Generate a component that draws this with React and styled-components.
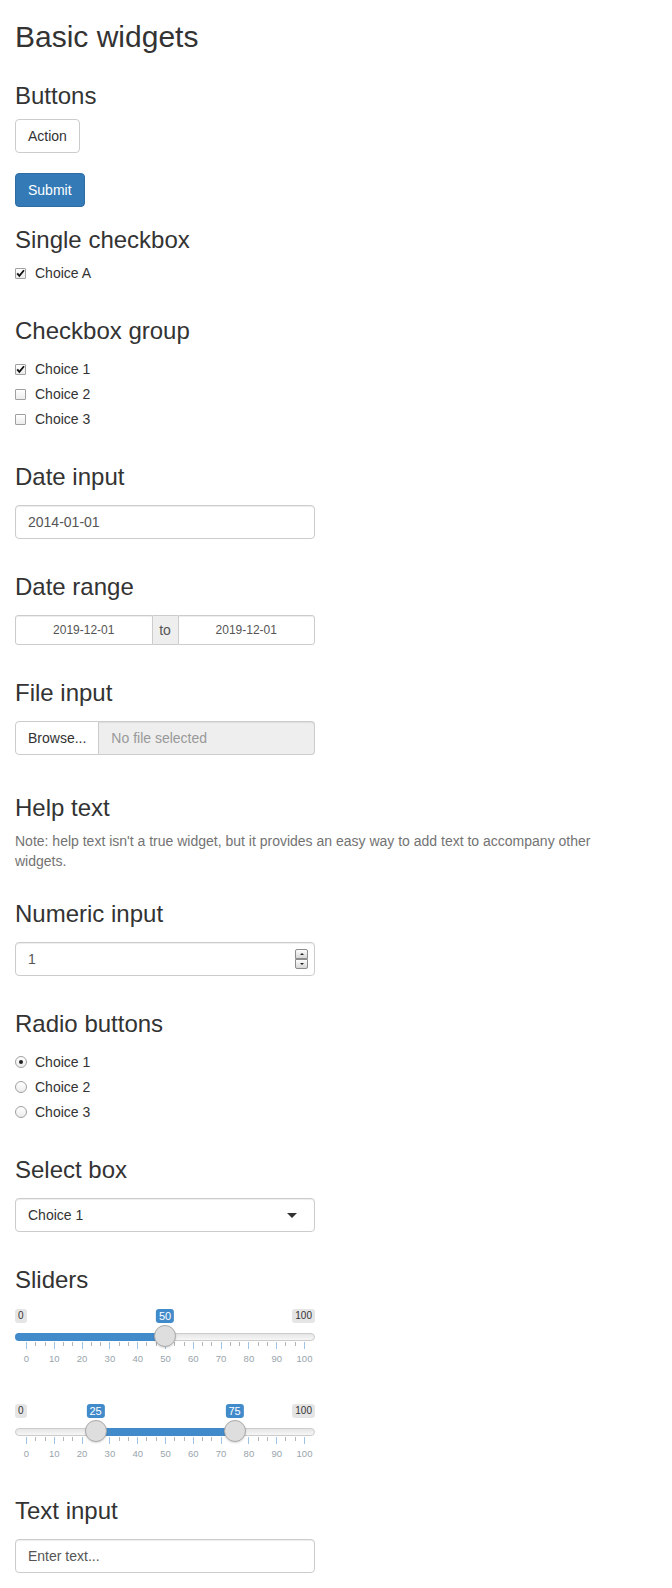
import React from "react";
import styled, { createGlobalStyle } from "styled-components";

const GlobalStyle = createGlobalStyle`
  html, body {
    margin: 0;
    padding: 0;
    background: #fff;
  }
  body {
    font-family: "Liberation Sans", Helvetica, Arial, sans-serif;
    font-size: 14px;
    line-height: 20px;
    color: #333;
  }
  * { box-sizing: border-box; }
`;

const Page = styled.div`
  display: flow-root;
  padding: 0 15px;
`;

const Title = styled.h2`
  margin: 20px 0 10px;
  font-size: 30px;
  font-weight: 500;
  line-height: 33px;
`;

const Section = styled.section`
  display: flow-root;
  margin-bottom: ${(p) => p.$after ?? 15}px;
`;

const Heading = styled.h3`
  margin: 20px 0 ${(p) => p.$gap ?? 10}px;
  font-size: 24px;
  font-weight: 500;
  line-height: 26px;
`;

/* buttons */
const ButtonStack = styled.div`
  display: flex;
  flex-direction: column;
  align-items: flex-start;
  gap: 20px;
`;

const Button = styled.button`
  height: 34px;
  padding: 6px 12px;
  font-family: inherit;
  font-size: 14px;
  line-height: 20px;
  border-radius: 4px;
  border: 1px solid ${(p) => (p.$primary ? "#2e6da4" : "#ccc")};
  background: ${(p) => (p.$primary ? "#337ab7" : "#fff")};
  color: ${(p) => (p.$primary ? "#fff" : "#333")};
`;

/* checkboxes and radios */
const OptionList = styled.div`
  display: flex;
  flex-direction: column;
  gap: 5px;
`;

const Option = styled.label`
  display: flex;
  align-items: center;
  gap: ${(p) => (p.$round ? 8 : 9)}px;
  height: 20px;
`;

const Box = styled.span`
  flex: none;
  display: flex;
  align-items: center;
  justify-content: center;
  width: ${(p) => (p.$round ? 12 : 11)}px;
  height: ${(p) => (p.$round ? 12 : 11)}px;
  border: 1px solid #a0a0a0;
  border-radius: ${(p) => (p.$round ? "50%" : "1px")};
  background: linear-gradient(#ffffff, #ececec);
`;

const Dot = styled.span`
  width: 4px;
  height: 4px;
  border-radius: 50%;
  background: #222;
`;

const Check = () => (
  <svg width="9" height="9" viewBox="0 0 9 9" style={{ overflow: "visible" }}>
    <path d="M1.2 4.3 L3.4 6.9 L8 1.2" fill="none" stroke="#111" strokeWidth="1.8" />
  </svg>
);

const Choice = ({ label, checked, round }) => (
  <Option $round={round}>
    <Box $round={round}>{checked && (round ? <Dot /> : <Check />)}</Box>
    {label}
  </Option>
);

/* text-like fields */
const Field = styled.div`
  display: flex;
  align-items: center;
  justify-content: space-between;
  width: 300px;
  height: 34px;
  padding: 0 ${(p) => p.$padRight ?? 12}px 0 12px;
  border: 1px solid #ccc;
  border-radius: 4px;
  box-shadow: inset 0 1px 1px rgba(0, 0, 0, 0.075);
  background: #fff;
  color: ${(p) => p.$color || "#555"};
`;

const RangeGroup = styled.div`
  display: flex;
  width: 300px;
  height: 30px;
`;

const RangeInput = styled.div`
  flex: 1;
  display: flex;
  align-items: center;
  justify-content: center;
  font-size: 12px;
  color: #555;
  border: 1px solid #ccc;
  border-radius: ${(p) => (p.$side === "left" ? "3px 0 0 3px" : "0 3px 3px 0")};
  box-shadow: inset 0 1px 1px rgba(0, 0, 0, 0.075);
`;

const Addon = styled.span`
  flex: none;
  width: 25px;
  display: flex;
  align-items: center;
  justify-content: center;
  background: #eee;
  border-top: 1px solid #ccc;
  border-bottom: 1px solid #ccc;
  color: #555;
`;

const FileGroup = styled.div`
  display: flex;
  width: 300px;
  height: 34px;
`;

const BrowseButton = styled.span`
  flex: none;
  display: flex;
  align-items: center;
  padding: 0 12px;
  border: 1px solid #ccc;
  border-radius: 4px 0 0 4px;
  background: #fff;
  color: #333;
`;

const FileName = styled.div`
  flex: 1;
  display: flex;
  align-items: center;
  padding: 0 12px;
  background: #eee;
  border: 1px solid #ccc;
  border-left: 0;
  border-radius: 0 4px 4px 0;
  box-shadow: inset 0 1px 1px rgba(0, 0, 0, 0.075);
  color: #999;
`;

const HelpText = styled.p`
  margin: 0;
  max-width: 630px;
  color: #737373;
`;

const Spinner = styled.div`
  display: flex;
  flex-direction: column;
  width: 13px;
  height: 20px;
`;

const SpinButton = styled.span`
  flex: 1;
  display: flex;
  align-items: center;
  justify-content: center;
  border: 1px solid #8c8c8c;
  background: linear-gradient(#fdfdfd, #d6d6d6);
  border-radius: ${(p) => (p.$down ? "0 0 2px 2px" : "2px 2px 0 0")};

  &::after {
    content: "";
    border-left: 2px solid transparent;
    border-right: 2px solid transparent;
    ${(p) => (p.$down ? "border-top: 2px solid #222;" : "border-bottom: 2px solid #222;")}
  }
`;

const Caret = styled.span`
  width: 0;
  height: 0;
  margin-right: 5px;
  border-style: solid;
  border-width: 5px 5px 0 5px;
  border-color: #333 transparent transparent transparent;
`;

/* sliders */
const SLIDER_W = 300;
const HANDLE = 22;
const at = (v) => HANDLE / 2 + ((SLIDER_W - HANDLE) * v) / 100;

const SliderBox = styled.div`
  position: relative;
  width: ${SLIDER_W}px;
  height: 60px;

  & + & {
    margin-top: 35px;
  }
`;

const Track = styled.div`
  position: absolute;
  left: 0;
  right: 0;
  top: 25px;
  height: 8px;
  border: 1px solid #ccc;
  border-radius: 8px;
  background: linear-gradient(to bottom, #ddd -50%, #fff 150%);
`;

const Bar = styled.div`
  position: absolute;
  top: 25px;
  height: 8px;
  background: #428bca;
  border-radius: ${(p) => (p.$single ? "8px 0 0 8px" : "0")};
`;

const Handle = styled.span`
  position: absolute;
  top: 17px;
  width: ${HANDLE}px;
  height: ${HANDLE}px;
  margin-left: -${HANDLE / 2}px;
  border: 1px solid #aaa;
  border-radius: 50%;
  background: #dedede;
  box-shadow: 0 1px 2px rgba(0, 0, 0, 0.15);
`;

const Tag = styled.span`
  position: absolute;
  top: 1px;
  padding: 1px 3px;
  border-radius: 3px;
  font-size: ${(p) => (p.$value ? 11 : 10)}px;
  line-height: 12px;
  color: ${(p) => (p.$value ? "#fff" : "#333")};
  background: ${(p) => (p.$value ? "#428bca" : "rgba(0, 0, 0, 0.1)")};
  ${(p) => p.$end === "min" && "left: 0;"}
  ${(p) => p.$end === "max" && "right: 0;"}
  ${(p) => p.$value && "transform: translateX(-50%);"}
`;

const Tick = styled.span`
  position: absolute;
  top: 34px;
  width: 1px;
  height: ${(p) => (p.$small ? 4 : 7)}px;
  background: ${(p) => (p.$small ? "#b5b5b5" : "#9fc3e4")};
`;

const TickLabel = styled.span`
  position: absolute;
  top: 46px;
  font-size: 9.5px;
  line-height: 10px;
  color: #99a4ac;
  transform: translateX(-50%);
`;

const Grid = () => {
  const items = [];
  for (let k = 0; k <= 10; k++) {
    const v = k * 10;
    items.push(<Tick key={`t${k}`} style={{ left: at(v) }} />);
    items.push(
      <TickLabel key={`l${k}`} style={{ left: at(v) + 0.5 }}>
        {v}
      </TickLabel>
    );
    if (k < 10) {
      items.push(<Tick key={`a${k}`} $small style={{ left: at(v + 10 / 3) }} />);
      items.push(<Tick key={`b${k}`} $small style={{ left: at(v + 20 / 3) }} />);
    }
  }
  return <>{items}</>;
};

const Slider = ({ values }) => {
  const single = values.length === 1;
  const from = single ? 0 : at(values[0]);
  const to = at(values[values.length - 1]);
  return (
    <SliderBox>
      <Tag $end="min">0</Tag>
      <Tag $end="max">100</Tag>
      <Track />
      <Bar $single={single} style={{ left: from, width: to - from }} />
      <Grid />
      {values.map((v) => (
        <Handle key={`h${v}`} style={{ left: at(v) }} />
      ))}
      {values.map((v) => (
        <Tag key={`v${v}`} $value style={{ left: at(v) }}>
          {v}
        </Tag>
      ))}
    </SliderBox>
  );
};

export default function App() {
  return (
    <>
      <GlobalStyle />
      <Page>
        <Title>Basic widgets</Title>

        <Section $after={0}>
          <Heading>Buttons</Heading>
          <ButtonStack>
            <Button>Action</Button>
            <Button $primary>Submit</Button>
          </ButtonStack>
        </Section>

        <Section>
          <Heading>Single checkbox</Heading>
          <Choice label="Choice A" checked />
        </Section>

        <Section>
          <Heading $gap={15}>Checkbox group</Heading>
          <OptionList>
            <Choice label="Choice 1" checked />
            <Choice label="Choice 2" />
            <Choice label="Choice 3" />
          </OptionList>
        </Section>

        <Section>
          <Heading $gap={15}>Date input</Heading>
          <Field>2014-01-01</Field>
        </Section>

        <Section>
          <Heading $gap={15}>Date range</Heading>
          <RangeGroup>
            <RangeInput $side="left">2019-12-01</RangeInput>
            <Addon>to</Addon>
            <RangeInput $side="right">2019-12-01</RangeInput>
          </RangeGroup>
        </Section>

        <Section $after={20}>
          <Heading $gap={15}>File input</Heading>
          <FileGroup>
            <BrowseButton>Browse...</BrowseButton>
            <FileName>No file selected</FileName>
          </FileGroup>
        </Section>

        <Section $after={10}>
          <Heading>Help text</Heading>
          <HelpText>
            Note: help text isn't a true widget, but it provides an easy way to add text to
            accompany other widgets.
          </HelpText>
        </Section>

        <Section>
          <Heading $gap={15}>Numeric input</Heading>
          <Field $padRight={6}>
            <span>1</span>
            <Spinner>
              <SpinButton />
              <SpinButton $down />
            </Spinner>
          </Field>
        </Section>

        <Section>
          <Heading $gap={15}>Radio buttons</Heading>
          <OptionList>
            <Choice label="Choice 1" round checked />
            <Choice label="Choice 2" round />
            <Choice label="Choice 3" round />
          </OptionList>
        </Section>

        <Section>
          <Heading $gap={15}>Select box</Heading>
          <Field $color="#333">
            <span>Choice 1</span>
            <Caret />
          </Field>
        </Section>

        <Section>
          <Heading $gap={15}>Sliders</Heading>
          <Slider values={[50]} />
          <Slider values={[25, 75]} />
        </Section>

        <Section>
          <Heading $gap={15}>Text input</Heading>
          <Field>Enter text...</Field>
        </Section>
      </Page>
    </>
  );
}
